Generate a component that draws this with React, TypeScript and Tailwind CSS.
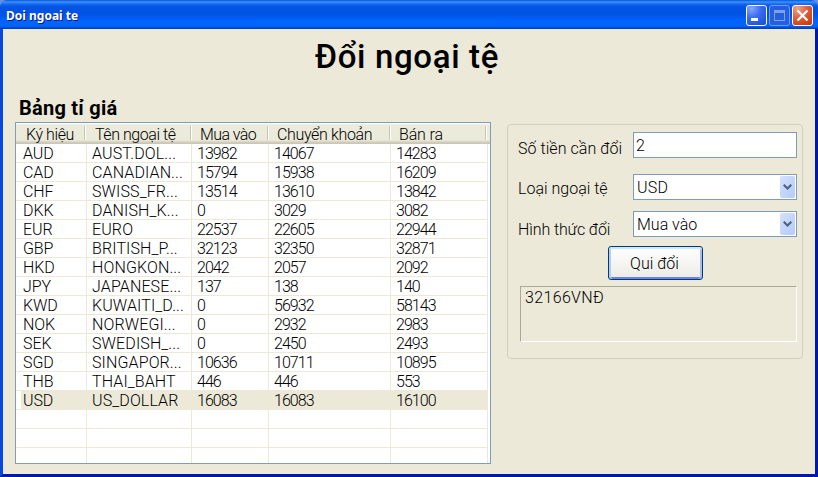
import React from "react";

type Cell = { text: string; className: string };

const headers: Cell[] = [
  { text: "Ký hiệu", className: "w-[70px] pl-[10px] tracking-[-0.4px]" },
  { text: "Tên ngoại tệ", className: "w-[106px] pl-[9px] tracking-[-0.45px]" },
  { text: "Mua vào", className: "w-[77px] pl-[8px] tracking-[-0.6px]" },
  { text: "Chuyển khoản", className: "w-[122px] pl-[8px] tracking-[-0.35px]" },
  { text: "Bán ra", className: "w-[96px] pl-[8px] tracking-[-0.15px]" },
];

const columns = [
  "w-[71px] pl-[7px] tracking-[-0.1px]",
  "w-[105px] pl-[5px] tracking-[0.12px]",
  "w-[77px] pl-[5px] tracking-[-0.95px]",
  "w-[122px] pl-[5px] tracking-[-0.95px]",
  "w-[97px] pl-[5px] tracking-[-0.95px]",
];

const rates = [
  ["AUD", "AUST.DOL...", "13982", "14067", "14283"],
  ["CAD", "CANADIAN...", "15794", "15938", "16209"],
  ["CHF", "SWISS_FR...", "13514", "13610", "13842"],
  ["DKK", "DANISH_K...", "0", "3029", "3082"],
  ["EUR", "EURO", "22537", "22605", "22944"],
  ["GBP", "BRITISH_P...", "32123", "32350", "32871"],
  ["HKD", "HONGKON...", "2042", "2057", "2092"],
  ["JPY", "JAPANESE...", "137", "138", "140"],
  ["KWD", "KUWAITI_D...", "0", "56932", "58143"],
  ["NOK", "NORWEGI...", "0", "2932", "2983"],
  ["SEK", "SWEDISH_...", "0", "2450", "2493"],
  ["SGD", "SINGAPOR...", "10636", "10711", "10895"],
  ["THB", "THAI_BAHT", "446", "446", "553"],
  ["USD", "US_DOLLAR", "16083", "16083", "16100"],
  ["", "", "", "", ""],
  ["", "", "", "", ""],
  ["", "", "", "", ""],
];

function TitleBar() {
  return (
    <div className="flex h-[29px] shrink-0 items-start rounded-t-[6px] bg-[linear-gradient(180deg,#0a52d8_0px,#3a93ff_2px,#1668f0_4px,#0354e3_7px,#0052e4_14px,#0062fa_20px,#0066ff_25px,#005cf0_27px,#0042bd_28px,#0042bd_29px)] pl-[6px] pr-[5px]">
      <div className="mt-[7px] font-['Noto_Sans',sans-serif] text-[12px] font-bold leading-[18px] text-white [text-shadow:1px_1px_0_#0a1883]">
        Doi ngoai te
      </div>
      <div className="ml-auto mt-[5px] flex gap-[2px]">
        <svg width="21" height="21" viewBox="0 0 21 21">
          <defs>
            <radialGradient id="blue" cx="25%" cy="15%" r="100%">
              <stop offset="0" stopColor="#86a9fa" />
              <stop offset=".45" stopColor="#3c6df0" />
              <stop offset="1" stopColor="#1b50d8" />
            </radialGradient>
            <radialGradient id="red" cx="25%" cy="15%" r="100%">
              <stop offset="0" stopColor="#f2a38c" />
              <stop offset=".45" stopColor="#e4623e" />
              <stop offset="1" stopColor="#ca3806" />
            </radialGradient>
          </defs>
          <rect x=".5" y=".5" width="20" height="20" rx="2.5" fill="url(#blue)" stroke="#fff" />
          <rect x="5" y="13" width="7" height="3" fill="#fff" />
        </svg>
        <svg width="21" height="21" viewBox="0 0 21 21">
          <rect x=".5" y=".5" width="20" height="20" rx="2.5" fill="#235ee3" stroke="#6b9cf6" />
          <rect x="5.5" y="5.5" width="10" height="10" fill="none" stroke="#7da0f1" />
          <rect x="5" y="5" width="11" height="3" fill="#7da0f1" />
        </svg>
        <svg width="21" height="21" viewBox="0 0 21 21">
          <rect x=".5" y=".5" width="20" height="20" rx="2.5" fill="url(#red)" stroke="#fff" />
          <path d="M5.5 5.5 15.5 15.5M15.5 5.5 5.5 15.5" stroke="#fff" strokeWidth="2.3" />
        </svg>
      </div>
    </div>
  );
}

function RateTable() {
  return (
    <div className="h-[342px] w-[476px] overflow-hidden border border-[#7f9db9] bg-white">
      <div className="flex h-[21px] bg-[linear-gradient(180deg,#ffffff_0px,#ebeadb_2px,#ebeadb_17px,#e2decd_18px,#d6d2c2_19px,#cbc7b8_20px)]">
        {headers.map((h, i) => (
          <div key={i} className={"flex shrink-0 whitespace-pre leading-[23px] " + h.className}>
            {h.text}
            <span className="ml-auto mt-[3px] h-[14px] w-[2px] border-l border-[#c7c5b2] bg-white" />
          </div>
        ))}
      </div>
      {rates.map((row, r) => (
        <div
          key={r}
          className={
            "flex h-[19px] w-[472px] border-b " +
            (row[0] === "USD"
              ? "border-[#ece9d8] bg-[linear-gradient(90deg,#fff_5px,#ece9d8_5px)]"
              : r === rates.length - 1
                ? "border-white"
                : "border-[#ece9d8]")
          }
        >
          {row.map((text, c) => (
            <div
              key={c}
              className={"shrink-0 whitespace-pre border-r border-[#ece9d8] leading-[20px] " + columns[c]}
            >
              {text}
            </div>
          ))}
        </div>
      ))}
    </div>
  );
}

function ComboBox({ value, className }: { value: string; className: string }) {
  return (
    <div className={"flex h-[26px] w-[164px] border border-[#7f9db9] bg-white p-px pl-[3px] " + className}>
      <span className="leading-[23px]">{value}</span>
      <span className="ml-auto flex h-[22px] w-[15px] items-center justify-center rounded-[2px] bg-linear-to-br from-[#d5e0fd] to-[#b3cbf8]">
        <svg width="9" height="6" viewBox="0 0 9 6">
          <path d="M.7.7 4.5 4.5 8.3.7" fill="none" stroke="#4d6185" strokeWidth="2" />
        </svg>
      </span>
    </div>
  );
}

function ConvertForm() {
  return (
    <div className="mt-[2px] h-[235px] w-[296px] rounded-[4px] border border-[#d0d0bf] pl-[10px] pt-[7px]">
      <div className="flex h-[26px]">
        <label className="w-[115px] pt-[6px] leading-[21px] tracking-[0.05px]">Số tiền cần đổi</label>
        <div className="h-[26px] w-[164px] border border-[#7f9db9] bg-white pl-[2px] leading-[25px]">2</div>
      </div>
      <div className="mt-[16px] flex h-[26px]">
        <label className="w-[115px] pt-[4px] leading-[21px]">Loại ngoại tệ</label>
        <ComboBox value="USD" className="tracking-[0.2px]" />
      </div>
      <div className="mt-[11px] flex h-[26px]">
        <label className="w-[115px] pt-[8px] leading-[21px] tracking-[-0.1px]">Hình thức đổi</label>
        <ComboBox value="Mua vào" className="tracking-[0px]" />
      </div>
      <button className="ml-[90px] mt-[9px] block h-[34px] w-[95px] rounded-[3px] border border-[#003c74] bg-linear-to-b from-white to-[#ecebe5] pr-[2px] leading-[33px] shadow-[inset_0_2px_0_#cee7ff,inset_2px_0_0_#b3cef5,inset_-2px_0_0_#a3bff0,inset_0_-2px_0_#6982ee]">
        Qui đổi
      </button>
      <div className="ml-[2px] mt-[6px] h-[56px] w-[277px] border border-b-white border-l-[#aca899] border-r-white border-t-[#aca899] pl-[4px] leading-[21px] tracking-[0.35px]">
        32166VNĐ
      </div>
    </div>
  );
}

export default function App() {
  return (
    <div className="h-[477px] w-[818px] bg-[#6b8fe0] font-[Roboto,sans-serif] text-[16px] font-light text-black">
      <div className="flex h-full flex-col overflow-hidden rounded-t-[6px]">
        <TitleBar />
        <div className="min-h-0 flex-1 border-x-[3px] border-b-[3px] border-b-[#0019ab] border-l-[#0a48dd] border-r-[#0019ab] bg-[#ece9d8]">
          <h1 className="ml-[312px] pt-[7px] text-[33px] font-medium leading-[42px] tracking-[0.65px] whitespace-nowrap">Đổi ngoại tệ</h1>
          <h2 className="ml-[16px] mt-[17px] text-[20px] font-bold leading-[26px] tracking-[0.25px] whitespace-nowrap">Bảng tỉ giá</h2>
          <div className="ml-[12px] mt-px flex gap-[16px]">
            <RateTable />
            <ConvertForm />
          </div>
        </div>
      </div>
    </div>
  );
}
